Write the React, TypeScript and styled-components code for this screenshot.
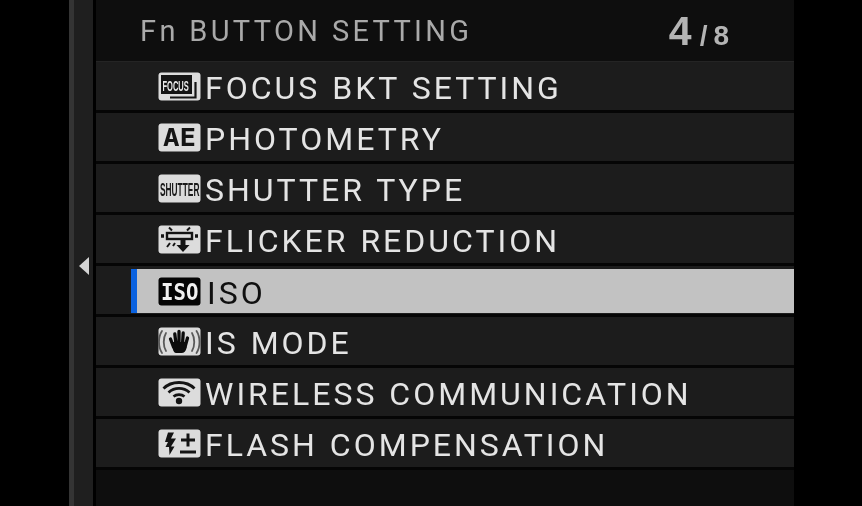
import React from "react"
import styled, { createGlobalStyle } from "styled-components"

const GlobalStyle = createGlobalStyle`
  html, body {
    margin: 0;
    padding: 0;
    background: #000;
    overflow: hidden;
  }
`

const Screen = styled.div`
  display: flex;
  width: 862px;
  height: 506px;
  padding-left: 69px;
  box-sizing: border-box;
  background: #000;
  font-family: "Roboto", "Liberation Sans", sans-serif;
  filter: blur(0.5px);
`

const Rail = styled.div`
  display: flex;
  align-items: center;
  justify-content: center;
  width: 24px;
  padding-top: 26px;
  box-sizing: border-box;
  background: #1f1f1f;
  border-left: 5px solid #343434;
`

const RailArrow = styled.div`
  width: 0;
  height: 0;
  border-top: 9px solid transparent;
  border-bottom: 9px solid transparent;
  border-right: 10px solid #d4d4d4;
`

const Panel = styled.div`
  display: flex;
  flex-direction: column;
  width: 698px;
  margin-left: 3px;
  background: #0e0e0e;
`

const Header = styled.div`
  display: flex;
  align-items: center;
  justify-content: space-between;
  height: 61px;
  padding: 0 59px 0 44px;
  border-bottom: 1px solid #242424;
`

const Title = styled.div`
  font-size: 29px;
  font-weight: 400;
  letter-spacing: 3.35px;
  color: #a9a9a9;
  white-space: nowrap;
`

const Pager = styled.div`
  display: flex;
  align-items: baseline;
  padding-top: 2px;
  font-family: "Liberation Sans", sans-serif;
  font-weight: 700;
  color: #b4b4b4;
`

const PagerCurrent = styled.span`
  font-size: 41px;
`

const PagerTotal = styled.span`
  margin-left: 8px;
  font-size: 28px;
  letter-spacing: 6px;
`

const List = styled.div`
  display: flex;
  flex-direction: column;
`

const Row = styled.div`
  display: flex;
  height: 48px;
  background: #1c1c1c;
  border-bottom: 3px solid #050505;
`

const RowBody = styled.div<{ $selected?: boolean }>`
  display: flex;
  flex: 1;
  align-items: center;
  gap: ${p => (p.$selected ? "6px" : "4px")};
  box-sizing: border-box;
  margin: ${p => (p.$selected ? "3px 0 1px 35px" : "0")};
  padding-top: ${p => (p.$selected ? "0" : "1px")};
  padding-left: ${p => (p.$selected ? "21px" : "62px")};
  background: ${p => (p.$selected ? "#c2c2c2" : "transparent")};
  border-left: ${p => (p.$selected ? "6px solid #0a62e0" : "none")};
  color: ${p => (p.$selected ? "#101010" : "#e4e4e4")};
`

const Label = styled.span`
  padding-top: 3px;
  font-size: 32px;
  font-weight: 400;
  letter-spacing: 3px;
  word-spacing: 1px;
  white-space: nowrap;
`

const BadgeSvg = styled.svg`
  display: block;
  flex: none;
  width: 43px;
  height: 29px;
`

const Badge = ({ children, dark }: { children: React.ReactNode; dark?: boolean }) => (
  <BadgeSvg viewBox="0 0 43 29">
    <rect x="0.5" y="0.5" width="42" height="28" rx="3" fill={dark ? "#050505" : "#dcdcdc"} />
    {children}
  </BadgeSvg>
)

// squeezed caption inside a badge, the camera uses a very narrow face here
const BadgeText = styled.text<{ $mono?: boolean }>`
  font-family: ${p => (p.$mono ? '"DejaVu Sans Mono", monospace' : '"Liberation Sans", sans-serif')};
  font-weight: 700;
`

const FocusIcon = () => (
  <Badge>
    <rect x="3" y="3" width="31" height="19" fill="#141414" />
    <BadgeText transform="translate(4.500 18.500) scale(0.5 1)" fontSize="15" fill="#e8e8e8">
      FOCUS
    </BadgeText>
    <path d="M12 25.500H37.500V10" fill="none" stroke="#141414" strokeWidth="2.200" />
  </Badge>
)

const AeIcon = () => (
  <Badge>
    <BadgeText $mono transform="translate(5 22.500) scale(1.100 1)" fontSize="25" fill="#141414">
      AE
    </BadgeText>
  </Badge>
)

const ShutterIcon = () => (
  <Badge>
    <BadgeText transform="translate(2 21.500) scale(0.44 1)" fontSize="19" fill="#1a1a1a">
      SHUTTER
    </BadgeText>
  </Badge>
)

const FlickerIcon = () => (
  <Badge>
    <g fill="none" stroke="#141414" strokeWidth="2">
      <rect x="9" y="8" width="25" height="6" strokeWidth="2.400" />
      <path d="M11 2.500l3 3M32 2.500l-3 3M9 22l3-4M17 18l-2 3" />
      <path d="M3 11h3M37 11h3" strokeWidth="3.500" />
    </g>
    <path d="M22.500 15h5v5h4l-6.500 7-6.500-7h4z" fill="#141414" />
  </Badge>
)

const IsoIcon = () => (
  <Badge dark>
    <BadgeText $mono transform="translate(3 22.500) scale(0.9 1)" fontSize="23" fill="#f0f0f0">
      ISO
    </BadgeText>
  </Badge>
)

const HandIcon = () => (
  <Badge>
    <g fill="none" stroke="#5a5a5a" strokeWidth="1.800" strokeLinecap="round">
      <path d="M8 6c-3 5-3 13 0 18M4 4c-4 6-4 16 0 22" />
      <path d="M34 6c3 5 3 13 0 18M38.500 4c4 6 4 16 0 22" />
    </g>
    <g stroke="#0c0c0c" strokeWidth="3.300" strokeLinecap="round">
      <path d="M12.500 12l3 8M16.800 7l1.200 10M21 4.500V16M25.200 6l-.7 11M29.500 11l-2.500 9" />
    </g>
    <path d="M14.500 15H28l.5 6c-.500 3-2.500 5-5 5h-5c-2 0-3-1-4-5z" fill="#0c0c0c" />
  </Badge>
)

const WifiIcon = () => (
  <Badge>
    <g fill="none" stroke="#141414" strokeWidth="2.800">
      <path d="M5.500 10.500c8-8 23-8 31 0" />
      <path d="M10.500 14.500c6-5.500 15-5.500 21 0" />
      <path d="M15.500 18.500c3-2.500 8-2.500 11 0" />
    </g>
    <circle cx="21" cy="23" r="3.200" fill="#141414" />
  </Badge>
)

const FlashIcon = () => (
  <Badge>
    <path d="M10 3.500h6l-3 6h5l-5 8h3.500L11.500 26l-.5-8H7.500l2.500-5H7z" fill="#141414" />
    <path d="M23 11h14M30 4.500v13M22 23h16" fill="none" stroke="#141414" strokeWidth="3" />
  </Badge>
)

const items = [
  { label: "FOCUS BKT SETTING", icon: <FocusIcon /> },
  { label: "PHOTOMETRY", icon: <AeIcon /> },
  { label: "SHUTTER TYPE", icon: <ShutterIcon /> },
  { label: "FLICKER REDUCTION", icon: <FlickerIcon /> },
  { label: "ISO", icon: <IsoIcon />, selected: true },
  { label: "IS MODE", icon: <HandIcon /> },
  { label: "WIRELESS COMMUNICATION", icon: <WifiIcon /> },
  { label: "FLASH COMPENSATION", icon: <FlashIcon /> },
]

export default function App() {
  return (
    <Screen>
      <GlobalStyle />
      <Rail>
        <RailArrow />
      </Rail>
      <Panel>
        <Header>
          <Title>Fn BUTTON SETTING</Title>
          <Pager>
            <PagerCurrent>4</PagerCurrent>
            <PagerTotal>/8</PagerTotal>
          </Pager>
        </Header>
        <List>
          {items.map(item => (
            <Row key={item.label}>
              <RowBody $selected={item.selected}>
                {item.icon}
                <Label>{item.label}</Label>
              </RowBody>
            </Row>
          ))}
        </List>
      </Panel>
    </Screen>
  )
}
